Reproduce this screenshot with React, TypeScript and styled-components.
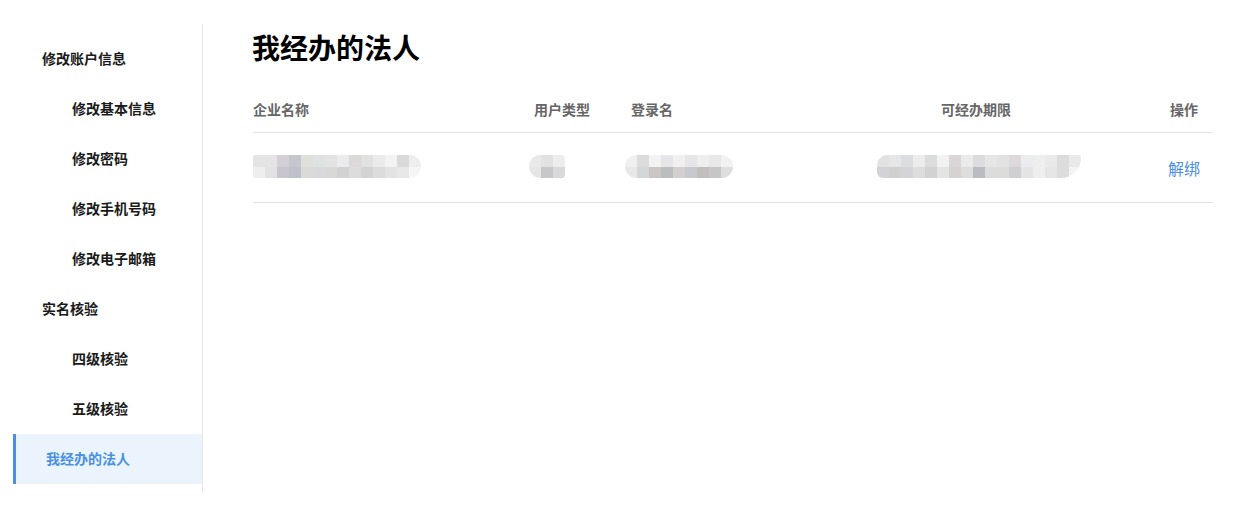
import React from "react";
import styled, { createGlobalStyle } from "styled-components";

const GlobalStyle = createGlobalStyle`
  html, body { margin: 0; padding: 0; background: #fff; }
  body { font-family: "Noto Sans CJK SC", "Noto Sans", "Liberation Sans", sans-serif; }
  * { box-sizing: border-box; }
`;

const Page = styled.div`
  display: flex;
  align-items: flex-start;
  padding: 24px 0 0 13px;
  width: 1244px;
  height: 509px;
`;

const Sidebar = styled.nav`
  width: 190px;
  height: 469px;
  padding: 10px 0 9px;
  border-right: 1px solid #e8e8e8;
  display: flex;
  flex-direction: column;
`;

const MenuItem = styled.div<{ $level: number; $active?: boolean }>`
  height: 50px;
  display: flex;
  align-items: center;
  padding-bottom: 2px;
  font-size: 14px;
  font-weight: 700;
  color: ${(p) => (p.$active ? "#4a90e2" : "#1a1a1a")};
  background: ${(p) => (p.$active ? "#ebf4fc" : "transparent")};
  border-left: ${(p) => (p.$active ? "3px solid #4a90e2" : "none")};
  padding-left: ${(p) => (p.$active ? 30 : p.$level === 1 ? 29 : 59)}px;
`;

const Main = styled.main`
  flex: 1;
  padding: 8px 31px 0 50px;
`;

const Title = styled.h1`
  margin: 0 0 0 -1px;
  font-size: 28px;
  line-height: 30px;
  font-weight: 700;
  color: #000;
`;

const Table = styled.div`
  margin-top: 27px;
  width: 960px;
`;

const Row = styled.div<{ $head?: boolean }>`
  display: grid;
  grid-template-columns: 281px 97px 166px 1fr 58px;
  align-items: center;
  height: ${(p) => (p.$head ? 44 : 70)}px;
  border-bottom: 1px solid #e3e3e3;
`;

const HeadCell = styled.div<{ $align?: string }>`
  font-size: 14px;
  font-weight: 700;
  color: #666;
  text-align: ${(p) => p.$align || "left"};
  padding-bottom: 3px;
`;

const Cell = styled.div<{ $align?: string; $shift?: number }>`
  display: flex;
  justify-content: ${(p) => p.$align || "flex-start"};
  margin-left: ${(p) => p.$shift || 0}px;
`;

const MosaicBox = styled.div<{ $radius: string }>`
  display: grid;
  grid-auto-flow: column;
  grid-template-rows: 12px 11px;
  border-radius: ${(p) => p.$radius};
  overflow: hidden;
  filter: blur(0.4px);
  margin-top: -3px;
`;

const Px = styled.div`
  width: 12px;
`;

const Link = styled.a`
  font-size: 16px;
  color: #4a90e2;
  text-decoration: none;
  cursor: pointer;
  margin-top: 1px;
`;

function Mosaic({ top, bottom, radius }: { top: string[]; bottom: string[]; radius: string }) {
  const cells: React.ReactNode[] = [];
  top.forEach((c, i) => {
    cells.push(<Px key={`t${i}`} style={{ background: c }} />);
    cells.push(<Px key={`b${i}`} style={{ background: bottom[i] }} />);
  });
  return <MosaicBox $radius={radius}>{cells}</MosaicBox>;
}

const menu = [
  { label: "修改账户信息", level: 1 },
  { label: "修改基本信息", level: 2 },
  { label: "修改密码", level: 2 },
  { label: "修改手机号码", level: 2 },
  { label: "修改电子邮箱", level: 2 },
  { label: "实名核验", level: 1 },
  { label: "四级核验", level: 2 },
  { label: "五级核验", level: 2 },
  { label: "我经办的法人", level: 1, active: true },
];

const entTop = ["#e4e4e4", "#e6e3e5", "#d2cfd7", "#c6c7ce", "#dfe0dc", "#dde2e3", "#e3e3e3", "#ebebee", "#dcdad8", "#e1e1e1", "#ebebeb", "#f3f3f3", "#dadada", "#eeeeee"];
const entBot = ["#eeeeee", "#e3e1e1", "#c9c5cf", "#bfc1ca", "#dadad6", "#d9d9dd", "#d8d8d8", "#d2d2d2", "#dcdcdc", "#d3d3d3", "#dcdcdc", "#e3e3e3", "#e8e8e8", "#f6f6f6"];

const typeTop = ["#e9e9e9", "#e2e2e2", "#ededed"];
const typeBot = ["#e6e6e6", "#c7c7c9", "#d9d9db"];

const loginTop = ["#f0f0f0", "#dcdcdc", "#f2f2f2", "#e6e6e8", "#f0f0f0", "#e6e6ea", "#eeeeee", "#e8e8e8", "#f2f2f2"];
const loginBot = ["#e8e8e8", "#d3d6d7", "#cbc6c5", "#bdbcbf", "#d3cfcf", "#c8c9cf", "#c3bebe", "#c6c6c6", "#dfdfe0"];

const perTop = ["#e2e2e2", "#e6e6e6", "#dcdde0", "#ececea", "#dadcde", "#f2f2f2", "#d8d6d6", "#ebebeb", "#dcdcde", "#e6e6e6", "#e2e2e2", "#ddd9da", "#ebecef", "#eeeeee", "#eaeaea", "#dcdcdc", "#e9e9e9"];
const perBot = ["#d3d3d5", "#d0d0d0", "#d4d4d6", "#dddddd", "#d1d2d4", "#e4e4e4", "#d5d2d0", "#dddddd", "#b9bcc1", "#dcdcdc", "#dcdcd8", "#cfcfd3", "#e4e4e4", "#efefef", "#e6e6e6", "#dcdcdc", "#f4f4f4"];

export default function App() {
  return (
    <>
      <GlobalStyle />
      <Page>
        <Sidebar>
          {menu.map((m) => (
            <MenuItem key={m.label} $level={m.level} $active={m.active}>
              {m.label}
            </MenuItem>
          ))}
        </Sidebar>
        <Main>
          <Title>我经办的法人</Title>
          <Table>
            <Row $head>
              <HeadCell>企业名称</HeadCell>
              <HeadCell>用户类型</HeadCell>
              <HeadCell>登录名</HeadCell>
              <HeadCell $align="center">可经办期限</HeadCell>
              <HeadCell $align="center">操作</HeadCell>
            </Row>
            <Row>
              <Cell>
                <Mosaic top={entTop} bottom={entBot} radius="3px 12px 12px 3px" />
              </Cell>
              <Cell $shift={-5}>
                <Mosaic top={typeTop} bottom={typeBot} radius="12px 4px 4px 12px" />
              </Cell>
              <Cell $shift={-6}>
                <Mosaic top={loginTop} bottom={loginBot} radius="12px" />
              </Cell>
              <Cell $align="center" $shift={6}>
                <Mosaic top={perTop} bottom={perBot} radius="10px 2px 20px 6px" />
              </Cell>
              <Cell $align="center">
                <Link>解绑</Link>
              </Cell>
            </Row>
          </Table>
        </Main>
      </Page>
    </>
  );
}
